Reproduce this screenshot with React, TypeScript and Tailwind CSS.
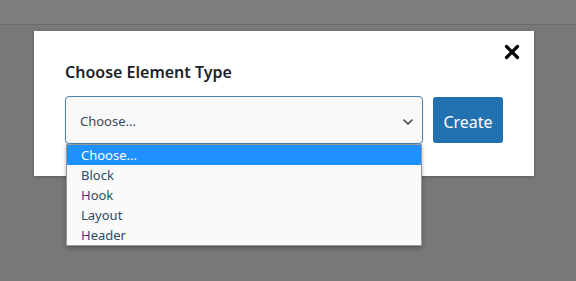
import { useState } from "react";

const options = ["Choose...", "Block", "Hook", "Layout", "Header"];

const App = () => {
  const [active] = useState(0);

  return (
    <div
      className="relative w-[576px] h-[281px] bg-[#787878] overflow-hidden"
      style={{ fontFamily: '"Noto Sans", "Open Sans", sans-serif' }}
    >
      {/* admin bar behind the overlay */}
      <div className="h-[25px] bg-[#7e7e7e] border-b border-[#6b6b6b]"></div>

      {/* modal */}
      <div className="absolute left-[34px] top-[31px] w-[500px] h-[145px] bg-white shadow-[0_1px_3px_rgba(0,0,0,0.25)] px-[31px] pt-[31px]">
        <button className="absolute right-[13px] top-[12px] w-[18px] h-[18px] flex items-center justify-center">
          <svg width="16" height="16" viewBox="0 0 16 16">
            <path
              d="M2.5 2.5 L13.5 13.5 M13.5 2.5 L2.5 13.5"
              stroke="#000"
              strokeWidth="3.2"
              strokeLinecap="round"
            />
          </svg>
        </button>

        <h3 className="text-[16px] leading-[20px] font-semibold text-[#1d2327]">
          Choose Element Type
        </h3>

        <div className="flex gap-[10px] mt-[14px]">
          <div className="relative">
            <div className="w-[358px] h-[48px] rounded-[4px] border border-[#4f7fa6] bg-[#f9f9f9] flex items-center justify-between pl-[14px] pr-[8px] pt-[3px] shadow-[0_1px_2px_rgba(0,0,0,0.12)]">
              <span className="text-[13px] text-[#34495e]">Choose...</span>
              <svg width="12" height="12" viewBox="0 0 12 12">
                <path
                  d="M2 4 L6 8 L10 4"
                  fill="none"
                  stroke="#3c434a"
                  strokeWidth="1.6"
                  strokeLinecap="round"
                  strokeLinejoin="round"
                />
              </svg>
            </div>

            {/* open option list */}
            <ul className="absolute left-[1px] top-[48px] w-[356px] bg-[#fafafa] border border-[#9a9a9a] shadow-[0_2px_4px_rgba(0,0,0,0.3)] z-10">
              {options.map((o, i) => (
                <li
                  key={o}
                  className={`h-[20px] leading-[20px] pl-[14px] text-[13px] ${
                    i === active
                      ? "bg-[#1e90ff] text-white"
                      : "text-[#2a4b66]"
                  }`}
                >
                  {o}
                </li>
              ))}
            </ul>
          </div>

          <button className="w-[70px] h-[46px] mt-[1px] pt-[3px] rounded-[3px] bg-[#2271b1] text-white text-[16px]">
            Create
          </button>
        </div>
      </div>
    </div>
  );
};

export default App;
